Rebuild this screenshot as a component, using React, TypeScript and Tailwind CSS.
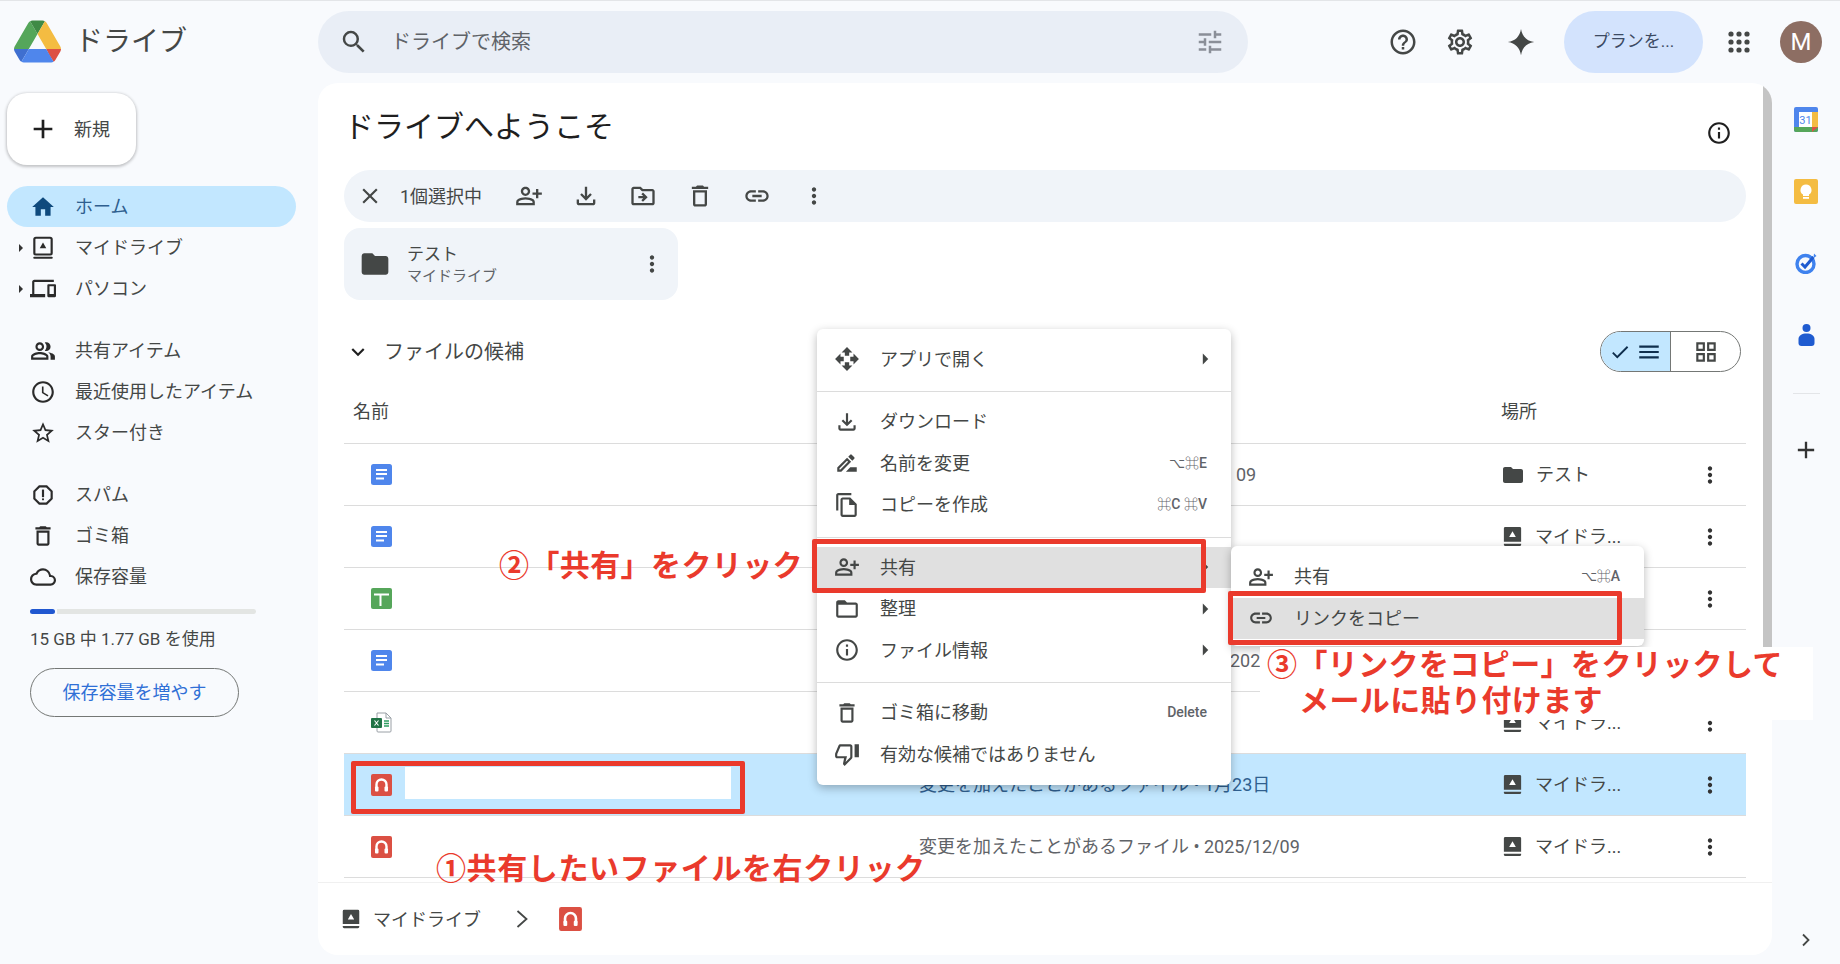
import type { ReactNode } from "react";
import {
  MdAdd,
  MdArrowRight,
  MdCheck,
  MdClose,
  MdExpandMore,
  MdFolder,
  MdHome,
  MdLink,
  MdMenu,
  MdMoreVert,
  MdOpenWith,
  MdOutlineAccessTime,
  MdOutlineCloud,
  MdOutlineDelete,
  MdOutlineDevices,
  MdOutlineDriveFileMove,
  MdOutlineDriveFileRenameOutline,
  MdOutlineFileCopy,
  MdOutlineFileDownload,
  MdOutlineFolderOpen,
  MdOutlineGridView,
  MdOutlineHelpOutline,
  MdOutlineInfo,
  MdOutlinePeopleAlt,
  MdOutlinePersonAddAlt,
  MdOutlineReport,
  MdOutlineSettings,
  MdOutlineThumbDown,
  MdSearch,
  MdStarBorder,
  MdTune,
} from "react-icons/md";

const DriveLogo = () => (
  <svg viewBox="0 0 87.3 78" className="h-[43px] w-[47px] shrink-0">
    <path d="m6.6 66.85 3.85 6.65c.8 1.4 1.95 2.5 3.3 3.3l13.75-23.8h-27.5c0 1.55.4 3.1 1.2 4.5z" fill="#3f6fd0" />
    <path d="m43.65 25-13.75-23.8c-1.35.8-2.5 1.9-3.3 3.3l-25.4 44a9.06 9.06 0 0 0 -1.2 4.5h27.5z" fill="#55a65a" />
    <path d="m73.55 76.8c1.35-.8 2.5-1.9 3.3-3.3l1.6-2.75 7.65-13.25c.8-1.4 1.2-2.95 1.2-4.5h-27.502l5.852 11.5z" fill="#dd5144" />
    <path d="m43.65 25 13.75-23.8c-1.35-.8-2.9-1.2-4.5-1.2h-18.5c-1.6 0-3.15.45-4.5 1.2z" fill="#3f8a46" />
    <path d="m59.8 53h-32.3l-13.75 23.8c1.35.8 2.9 1.2 4.5 1.2h50.8c1.6 0 3.15-.45 4.5-1.2z" fill="#4f86ec" />
    <path d="m73.4 26.5-12.7-22c-.8-1.4-1.95-2.5-3.3-3.3l-13.75 23.8 16.15 28h27.45c0-1.55-.4-3.1-1.2-4.5z" fill="#f4bc42" />
  </svg>
);

const MyDriveOutline = ({ className }: { className?: string }) => (
  <svg viewBox="0 0 24 24" className={className} fill="none">
    <rect x="4" y="2.5" width="16" height="15.5" rx="1.5" stroke="currentColor" strokeWidth="2" />
    <path d="M12 7l3 5.2H9z" fill="currentColor" />
    <path d="M4 21h16" stroke="currentColor" strokeWidth="2" strokeLinecap="round" />
  </svg>
);

const MyDriveFilled = ({ className }: { className?: string }) => (
  <svg viewBox="0 0 24 24" className={className}>
    <path d="M4.5 2h15A1.5 1.5 0 0 1 21 3.500V17.500H3V3.500A1.500 1.500 0 0 1 4.500 2z" fill="currentColor" />
    <path d="M3 19.500h18v1A1.500 1.500 0 0 1 19.500 22h-15A1.500 1.500 0 0 1 3 20.500z" fill="currentColor" />
    <path d="M12 6.500l3.500 6h-7z" fill="#fff" />
  </svg>
);

const DocsIcon = () => (
  <svg viewBox="0 0 21 21" className="h-[21px] w-[21px]">
    <rect width="21" height="21" rx="2.500" fill="#4f86ec" />
    <path d="M5 6h11M5 10h11M5 14.500h8" stroke="#fff" strokeWidth="2" />
  </svg>
);

const SheetsIcon = () => (
  <svg viewBox="0 0 21 21" className="h-[21px] w-[21px]">
    <rect width="21" height="21" rx="2" fill="#56a65a" />
    <path d="M3 6.500h15M9.500 6.500V18" stroke="#fff" strokeWidth="2" />
  </svg>
);

const ExcelIcon = () => (
  <svg viewBox="0 0 21 21" className="h-[21px] w-[21px]">
    <path d="M6 1h9l5 5v13a1 1 0 0 1-1 1H7a1 1 0 0 1-1-1z" fill="#fff" stroke="#9aa0a6" />
    <path d="M15 1v5h5" fill="none" stroke="#9aa0a6" />
    <rect x="0" y="6" width="11" height="10" rx="1" fill="#217346" />
    <path d="M3.500 8.500l4 5M7.500 8.500l-4 5" stroke="#fff" strokeWidth="1.100" />
    <path d="M13 9h5M13 11.500h5M13 14h5" stroke="#2e9e62" strokeWidth="1.300" />
  </svg>
);

const RedIcon = ({ className }: { className?: string }) => (
  <svg viewBox="0 0 21 22" className={className}>
    <rect width="21" height="22" rx="2" fill="#db5043" />
    <path d="M5.500 15v-4.500a5 5 0 0 1 10 0V15" fill="none" stroke="#fff" strokeWidth="2.400" />
    <rect x="4" y="12.500" width="3.500" height="5" rx="1" fill="#fff" />
    <rect x="13.500" y="12.500" width="3.500" height="5" rx="1" fill="#fff" />
  </svg>
);

const AppsDots = () => (
  <svg viewBox="0 0 22 22" className="h-[22px] w-[22px]" fill="#444746">
    {[3, 11, 19].flatMap((y) =>
      [3, 11, 19].map((x) => <circle key={`${x}-${y}`} cx={x} cy={y} r="2.600" />),
    )}
  </svg>
);

const Sparkle = () => (
  <svg viewBox="0 0 24 24" className="h-[30px] w-[30px]" fill="#444746">
    <path d="M12 1.500C13 7.500 16.500 11 22.500 12C16.500 13 13 16.500 12 22.500C11 16.500 7.500 13 1.500 12C7.500 11 11 7.500 12 1.500Z" />
  </svg>
);

const CalendarIcon = () => (
  <svg viewBox="0 0 24 25" className="h-[25px] w-[24px]">
    <rect x="0" y="0" width="24" height="25" rx="2" fill="#4f86ec" />
    <rect x="18" y="5" width="6" height="15" fill="#f4bc42" />
    <path d="M0 20h24v3a2 2 0 0 1-2 2H2a2 2 0 0 1-2-2z" fill="#56a65a" />
    <path d="M18 25l6-5h-6z" fill="#dd5144" />
    <rect x="5" y="5" width="13" height="15" fill="#fff" />
    <text x="11.500" y="17" textAnchor="middle" fontSize="11" fill="#4f86ec" fontFamily="Roboto, sans-serif">31</text>
  </svg>
);

const KeepIcon = () => (
  <svg viewBox="0 0 24 25" className="h-[25px] w-[24px]">
    <rect width="24" height="25" rx="2" fill="#f4bc42" />
    <path d="M12 5.500a5.500 5.500 0 0 0-3 10.100V17h6v-1.400a5.500 5.500 0 0 0-3-10.100z" fill="#fff" />
    <rect x="9" y="18" width="6" height="1.800" fill="#fff" />
  </svg>
);

const TasksIcon = () => (
  <svg viewBox="0 0 24 22" className="h-[22px] w-[24px]" fill="none">
    <circle cx="11.500" cy="12" r="8.500" stroke="#3f82ee" strokeWidth="3.400" />
    <path d="M7.500 11.500l3.500 3.500 8.500-10" stroke="#1f5bd0" strokeWidth="3" />
    <path d="M20 1.500l2.500 2.500-3 2z" fill="#3f82ee" />
  </svg>
);

const ContactsIcon = () => (
  <svg viewBox="0 0 19 22" className="h-[22px] w-[19px]">
    <circle cx="9.500" cy="4" r="4" fill="#1f5bd0" />
    <path d="M9.500 9.500c4.500 0 8 2 8 5.500v4a3 3 0 0 1-3 3h-10a3 3 0 0 1-3-3v-4c0-3.500 3.500-5.500 8-5.500z" fill="#1f5bd0" />
  </svg>
);

const ThinChevron = () => (
  <svg viewBox="0 0 12 18" className="h-[18px] w-[12px]" fill="none">
    <path d="M1.500 1l9 8-9 8" stroke="#444746" strokeWidth="1.800" />
  </svg>
);

const NavItem = ({
  icon,
  label,
  caret,
  active,
}: {
  icon: ReactNode;
  label: string;
  caret?: boolean;
  active?: boolean;
}) => (
  <div
    className={`ml-[7px] flex h-[41px] w-[289px] items-center rounded-full text-[18px] ${
      active ? "bg-[#c2e7ff] text-[#2f5f8f]" : "text-[#444746]"
    }`}
  >
    <span className="flex w-[23px] justify-start pl-[12px]">
      {caret && <span className="h-0 w-0 border-y-[4px] border-l-[4px] border-y-transparent border-l-[#333]" />}
    </span>
    <span className={`flex h-[26px] w-[26px] items-center justify-center ${active ? "text-[#0f4a7d]" : "text-[#2b2b2b]"}`}>
      {icon}
    </span>
    <span className="ml-[19px]">{label}</span>
  </div>
);

const Sidebar = () => (
  <aside className="flex w-[318px] shrink-0 flex-col">
    <button className="ml-[7px] mt-[10px] flex h-[72px] w-[129px] items-center rounded-[20px] bg-white pl-[20px] text-[18px] text-[#444746] shadow-[0_1px_3px_1px_rgba(0,0,0,0.22)]">
      <MdAdd size={32} className="text-[#1f1f1f]" />
      <span className="ml-[15px]">新規</span>
    </button>
    <div className="mt-[21px]">
      <NavItem active icon={<MdHome size={26} />} label="ホーム" />
      <NavItem caret icon={<MyDriveOutline className="h-[26px] w-[26px]" />} label="マイドライブ" />
      <NavItem caret icon={<MdOutlineDevices size={27} />} label="パソコン" />
    </div>
    <div className="mt-[21px]">
      <NavItem icon={<MdOutlinePeopleAlt size={26} />} label="共有アイテム" />
      <NavItem icon={<MdOutlineAccessTime size={26} />} label="最近使用したアイテム" />
      <NavItem icon={<MdStarBorder size={26} />} label="スター付き" />
    </div>
    <div className="mt-[21px]">
      <NavItem icon={<MdOutlineReport size={26} />} label="スパム" />
      <NavItem icon={<MdOutlineDelete size={26} />} label="ゴミ箱" />
      <NavItem icon={<MdOutlineCloud size={28} />} label="保存容量" />
    </div>
    <div className="ml-[30px] mt-[12px] flex h-[5px] w-[226px] gap-[2px]">
      <div className="w-[25px] rounded-full bg-[#2057d0]" />
      <div className="flex-1 rounded-r-full bg-[#e3e5e3]" />
    </div>
    <p className="ml-[30px] mt-[10px] text-[17px] leading-[30px] text-[#444746]">15 GB 中 1.77 GB を使用</p>
    <button className="ml-[30px] mt-[14px] h-[49px] w-[209px] rounded-full border border-[#747775] text-[18px] text-[#2f6fd6]">
      保存容量を増やす
    </button>
  </aside>
);

type Row = {
  icon: ReactNode;
  modified?: ReactNode;
  place: "test" | "drive";
  selected?: boolean;
};

const rows: Row[] = [
  { icon: <DocsIcon />, modified: <span className="pl-[317px]">09</span>, place: "test" },
  { icon: <DocsIcon />, place: "drive" },
  { icon: <SheetsIcon />, place: "drive" },
  { icon: <DocsIcon />, modified: <span className="pl-[311px]">2024/09/09</span>, place: "drive" },
  { icon: <ExcelIcon />, place: "drive" },
  {
    icon: <RedIcon className="h-[22px] w-[21px]" />,
    modified: "変更を加えたことがあるファイル • 1月23日",
    place: "drive",
    selected: true,
  },
  {
    icon: <RedIcon className="h-[22px] w-[21px]" />,
    modified: "変更を加えたことがあるファイル • 2025/12/09",
    place: "drive",
  },
];

const FileRow = ({ row }: { row: Row }) => (
  <div className={`flex h-[62px] items-center border-b border-[#dcdcdc] text-[18px] ${row.selected ? "bg-[#c2e7ff]" : ""}`}>
    <div className="w-[575px] pl-[27px]">{row.icon}</div>
    <div className={`w-[582px] whitespace-nowrap ${row.selected ? "text-[#2f5f8f]" : "text-[#5f6368]"}`}>{row.modified}</div>
    <div className="flex flex-1 items-center text-[#444746]">
      {row.place === "test" ? (
        <MdFolder size={24} className="text-[#444746]" />
      ) : (
        <MyDriveFilled className="h-[23px] w-[23px] text-[#444746]" />
      )}
      <span className="ml-[11px]">{row.place === "test" ? "テスト" : "マイドラ..."}</span>
    </div>
    <div className="mr-[23px] text-[#333]">
      <MdMoreVert size={26} />
    </div>
  </div>
);

const ToolButton = ({ children }: { children: ReactNode }) => (
  <div className="flex w-[57px] justify-center text-[#444746]">{children}</div>
);

const MainCard = () => (
  <main className="relative flex h-[872px] w-[1454px] shrink-0 flex-col overflow-hidden rounded-[20px] bg-white">
    <div className="absolute right-0 top-0 h-[617px] w-[9px] bg-[#c4c4c4]" />
    <div className="flex flex-1 flex-col px-[26px]">
      <div className="flex h-[87px] items-center justify-between pr-[14px]">
        <h1 className="text-[30px] font-normal text-[#1f1f1f]">ドライブへようこそ</h1>
        <MdOutlineInfo size={26} className="mt-[12px] text-[#1f1f1f]" />
      </div>
      <div className="flex h-[52px] items-center rounded-full bg-[#f0f4f9] pl-[13px] text-[18px] text-[#444746]">
        <MdClose size={26} />
        <span className="ml-[17px] w-[85px] whitespace-nowrap">1個選択中</span>
        <div className="ml-[15px] flex items-center">
          <ToolButton><MdOutlinePersonAddAlt size={28} /></ToolButton>
          <ToolButton><MdOutlineFileDownload size={28} /></ToolButton>
          <ToolButton><MdOutlineDriveFileMove size={28} /></ToolButton>
          <ToolButton><MdOutlineDelete size={28} /></ToolButton>
          <ToolButton><MdLink size={28} /></ToolButton>
          <ToolButton><MdMoreVert size={26} /></ToolButton>
        </div>
      </div>
      <div className="mt-[6px] flex h-[72px] w-[334px] items-center rounded-[16px] bg-[#f0f4f9] pl-[15px]">
        <MdFolder size={32} className="text-[#444746]" />
        <div className="ml-[16px] flex-1">
          <div className="text-[17px] leading-[24px] text-[#444746]">テスト</div>
          <div className="text-[15px] leading-[20px] text-[#5f6368]">マイドライブ</div>
        </div>
        <MdMoreVert size={26} className="mr-[13px] text-[#444746]" />
      </div>
      <div className="mt-[31px] flex h-[41px] items-center justify-between pr-[5px]">
        <div className="flex items-center pl-[1px] text-[20px] text-[#444746]">
          <MdExpandMore size={26} className="text-[#1f1f1f]" />
          <span className="ml-[13px]">ファイルの候補</span>
        </div>
        <div className="flex h-[41px] w-[141px] overflow-hidden rounded-full border border-[#747775]">
          <div className="flex w-[70px] items-center justify-center gap-[5px] border-r border-[#747775] bg-[#c2e7ff] text-[#0f2f4d]">
            <MdCheck size={22} />
            <MdMenu size={26} />
          </div>
          <div className="flex flex-1 items-center justify-center text-[#444746]">
            <MdOutlineGridView size={26} />
          </div>
        </div>
      </div>
      <div className="flex h-[72px] items-end border-b border-[#dcdcdc] pb-[18px] text-[18px] text-[#444746]">
        <span className="ml-[9px] w-[1148px]">名前</span>
        <span>場所</span>
      </div>
      {rows.map((row, i) => (
        <FileRow key={i} row={row} />
      ))}
    </div>
    <div className="mx-[0px] mt-[4px] flex h-[73px] items-center border-t border-[#f0f0f0] pl-[22px] text-[18px] text-[#444746]">
      <MyDriveFilled className="h-[22px] w-[22px] text-[#444746]" />
      <span className="ml-[11px]">マイドライブ</span>
      <span className="ml-[35px]"><ThinChevron /></span>
      <RedIcon className="ml-[31px] h-[24px] w-[23px]" />
    </div>
  </main>
);

const RightRail = () => (
  <aside className="flex flex-1 flex-col items-center pb-[12px]">
    <div className="flex h-[72px] items-center"><CalendarIcon /></div>
    <div className="flex h-[72px] items-center"><KeepIcon /></div>
    <div className="flex h-[72px] items-center"><TasksIcon /></div>
    <div className="flex h-[72px] items-center"><ContactsIcon /></div>
    <div className="mt-[22px] h-px w-[27px] bg-[#e3e5e8]" />
    <MdAdd size={28} className="mt-[42px] text-[#333]" />
    <div className="mt-auto text-[#444746]">
      <svg viewBox="0 0 24 24" className="h-[24px] w-[24px]" fill="none">
        <path d="M9 6.500l5.500 5.500L9 17.500" stroke="currentColor" strokeWidth="1.800" />
      </svg>
    </div>
  </aside>
);

const MenuItem = ({
  icon,
  label,
  shortcut,
  arrow,
  hover,
}: {
  icon: ReactNode;
  label: string;
  shortcut?: string;
  arrow?: boolean;
  hover?: boolean;
}) => (
  <div className={`flex h-[41.500px] items-center pl-[16px] pr-[24px] text-[18px] text-[#444746] ${hover ? "bg-[#e0e0e0]" : ""}`}>
    <span className="flex w-[28px] justify-center text-[#444746]">{icon}</span>
    <span className="ml-[19px] flex-1">{label}</span>
    {shortcut && <span className="text-[14px] font-medium text-[#5f6368]">{shortcut}</span>}
    {arrow && <MdArrowRight size={26} className="-mr-[11px] text-[#444746]" />}
  </div>
);

const MenuSeparator = ({ top, bottom }: { top: string; bottom: string }) => (
  <div className={`border-t border-[#dcdcdc] ${top} ${bottom}`} />
);

const ContextMenus = () => (
  <>
    <div className="absolute left-[817px] top-[329px] z-10 w-[414px] rounded-[6px] bg-white pb-[10px] pt-[9.500px] shadow-[0_3px_10px_rgba(0,0,0,0.28)]">
      <MenuItem icon={<MdOpenWith size={26} />} label="アプリで開く" arrow />
      <MenuSeparator top="mt-[11px]" bottom="mb-[9px]" />
      <MenuItem icon={<MdOutlineFileDownload size={26} />} label="ダウンロード" />
      <MenuItem icon={<MdOutlineDriveFileRenameOutline size={26} />} label="名前を変更" shortcut="⌥⌘E" />
      <MenuItem icon={<MdOutlineFileCopy size={26} />} label="コピーを作成" shortcut="⌘C ⌘V" />
      <MenuSeparator top="mt-[11px]" bottom="mb-[9px]" />
      <MenuItem icon={<MdOutlinePersonAddAlt size={26} />} label="共有" arrow hover />
      <MenuItem icon={<MdOutlineFolderOpen size={26} />} label="整理" arrow />
      <MenuItem icon={<MdOutlineInfo size={26} />} label="ファイル情報" arrow />
      <MenuSeparator top="mt-[11px]" bottom="mb-[9px]" />
      <MenuItem icon={<MdOutlineDelete size={26} />} label="ゴミ箱に移動" shortcut="Delete" />
      <MenuItem icon={<MdOutlineThumbDown size={26} />} label="有効な候補ではありません" />
    </div>
    <div className="absolute left-[1231px] top-[546px] z-10 h-[100px] w-[413px] rounded-[6px] bg-white pt-[10px] shadow-[0_3px_10px_rgba(0,0,0,0.28)]">
      <MenuItem icon={<MdOutlinePersonAddAlt size={26} />} label="共有" shortcut="⌥⌘A" />
      <MenuItem icon={<MdLink size={26} />} label="リンクをコピー" hover />
    </div>
  </>
);

const Annotations = () => (
  <>
    {/* red call-out boxes drawn over the screenshot */}
    <div className="absolute left-[812px] top-[539px] z-20 h-[54px] w-[394px] rounded-[2px] border-[5px] border-[#ea3a2c]" />
    <div className="absolute left-[1228px] top-[591px] z-20 h-[54px] w-[394px] rounded-[2px] border-[5px] border-[#ea3a2c]" />
    <div className="absolute left-[351px] top-[761px] z-20 h-[53px] w-[394px] rounded-[2px] border-[5px] border-[#ea3a2c]" />
    <div className="absolute left-[405px] top-[767px] z-20 h-[32px] w-[326px] bg-white" />

    <div className="absolute left-[499px] top-[546px] z-20 whitespace-nowrap text-[30px] font-bold leading-[40px] tracking-[0.4px] text-[#ea3a2c]">
      ②「共有」をクリック
    </div>
    <div className="absolute left-[436px] top-[849px] z-20 whitespace-nowrap text-[30px] font-bold leading-[40px] tracking-[0.6px] text-[#ea3a2c]">
      ①共有したいファイルを右クリック
    </div>
    <div className="absolute left-[1260px] top-[647px] z-20 h-[73px] w-[553px] bg-white pl-[7px] text-[30px] font-bold leading-[36px] tracking-[0.4px] text-[#ea3a2c]">
      <div className="whitespace-nowrap">③「リンクをコピー」をクリックして</div>
      <div className="whitespace-nowrap pl-[32px]">メールに貼り付けます</div>
    </div>
  </>
);

export default function App() {
  return (
    <div
      className="relative h-[964px] w-[1840px] overflow-hidden bg-[#f8fafd]"
      style={{ fontFamily: 'Roboto, "Noto Sans CJK JP", sans-serif' }}
    >
      <header className="flex h-[83px] items-center border-t border-[#e3e5e8] pb-px">
        <div className="flex w-[318px] shrink-0 items-center pl-[14px]">
          <DriveLogo />
          <span className="ml-[14px] text-[28px] leading-[36px] text-[#444746]">ドライブ</span>
        </div>
        <div className="flex h-[62px] w-[930px] shrink-0 items-center rounded-full bg-[#e9eef6] pl-[21px] pr-[23px]">
          <MdSearch size={30} className="text-[#444746]" />
          <span className="ml-[22px] flex-1 text-[20px] text-[#5f6368]">ドライブで検索</span>
          <MdTune size={30} className="text-[#8a8f98]" />
        </div>
        <MdOutlineHelpOutline size={30} className="ml-[140px] text-[#444746]" />
        <MdOutlineSettings size={30} className="ml-[27px] text-[#444746]" />
        <span className="ml-[31px]"><Sparkle /></span>
        <button className="ml-[28px] h-[62px] w-[139px] rounded-full bg-[#d3e3fd] text-[17px] text-[#3c4a63]">プランを...</button>
        <span className="ml-[25px]"><AppsDots /></span>
        <div className="ml-[30px] flex h-[42px] w-[42px] items-center justify-center rounded-full bg-[#8d6e63] text-[24px] text-white">M</div>
      </header>
      <div className="flex h-[881px]">
        <Sidebar />
        <MainCard />
        <RightRail />
      </div>
      <ContextMenus />
      <Annotations />
    </div>
  );
}
